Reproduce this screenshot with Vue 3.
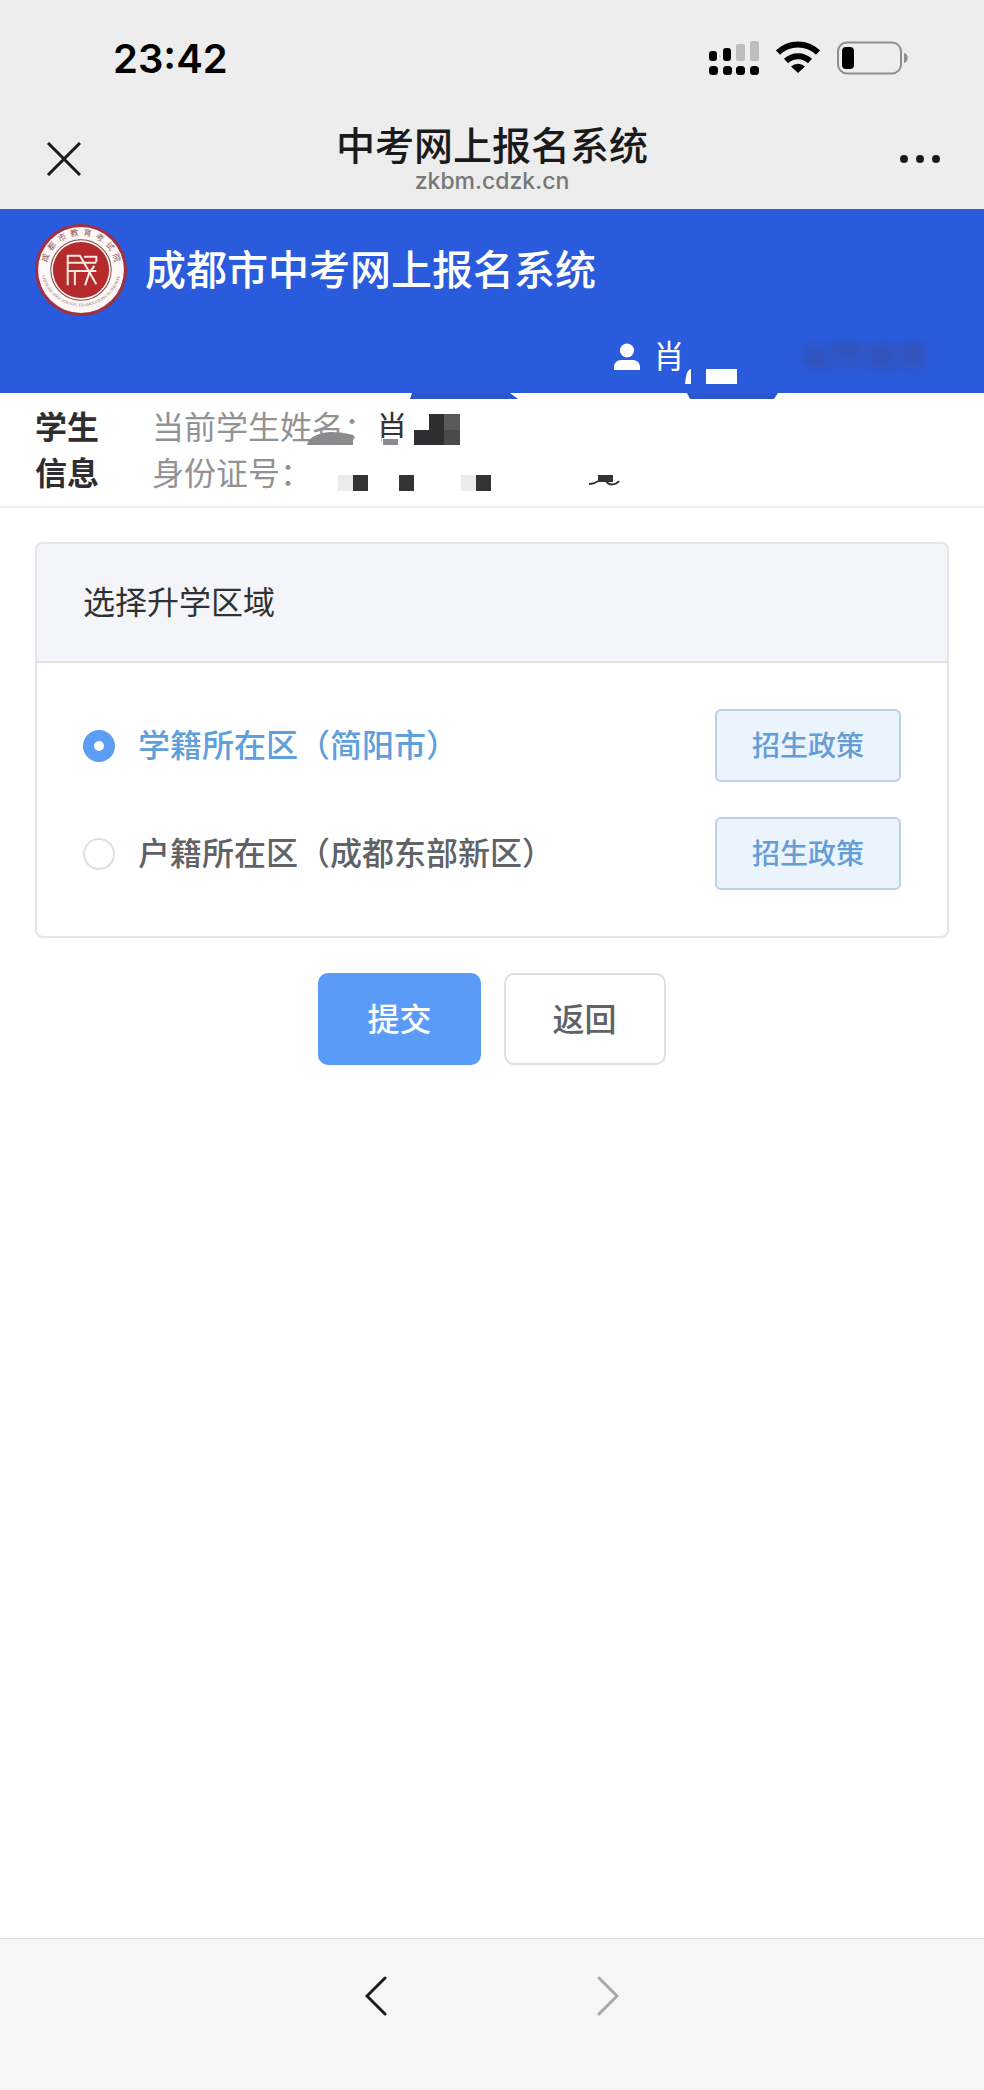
<template>
  <div class="page">
    <header class="chrome">
      <div class="status-bar">
        <time class="clock">23:42</time>
        <div class="status-icons">
          <svg width="50" height="34" viewBox="0 0 50 34" aria-hidden="true">
            <rect x="0" y="10" width="8" height="10" rx="3" />
            <rect x="14" y="7" width="8" height="13" rx="3" />
            <rect x="27" y="3" width="9" height="17" rx="2" fill="#bdbdbd" />
            <rect x="41" y="0" width="9" height="20" rx="2" fill="#bdbdbd" />
            <rect v-for="x in [0, 14, 27, 41]" :key="x" :x="x" y="25" width="9" height="9" rx="3.5" />
          </svg>
          <svg width="44" height="34" viewBox="0 0 44 34" aria-hidden="true">
            <g fill="none" stroke="#000" stroke-width="6">
              <path d="M2 11.500a29 29 0 0 1 40 0" />
              <path d="M10 20a17.500 17.500 0 0 1 24 0" />
            </g>
            <path d="M22 32l-7-6.600a10.500 10.500 0 0 1 14 0z" />
          </svg>
          <svg width="72" height="34" viewBox="0 0 72 34" aria-hidden="true">
            <rect x="1" y="1.500" width="63" height="31" rx="9" fill="none" stroke="#8e8e8e" stroke-width="2" />
            <rect x="5" y="6" width="12" height="22" rx="4" />
            <path d="M67 12c5 1 5 9 0 10z" fill="#8e8e8e" />
          </svg>
        </div>
      </div>
      <div class="title-bar">
        <button class="icon-btn" type="button" aria-label="关闭">
          <svg width="38" height="34" viewBox="-4 0 38 34" fill="none" stroke="#1a1a1a" stroke-width="3">
            <path d="M1 1l32 32M33 1L1 33" />
          </svg>
        </button>
        <div class="title-text">
          <div class="title-name">中考网上报名系统</div>
          <div class="title-host">zkbm.cdzk.cn</div>
        </div>
        <button class="icon-btn icon-btn-right" type="button" aria-label="更多">
          <svg width="42" height="10" viewBox="0 0 42 10" fill="#1a1a1a">
            <circle cx="5" cy="5" r="4" />
            <circle cx="21" cy="5" r="4" />
            <circle cx="37" cy="5" r="4" />
          </svg>
        </button>
      </div>
    </header>

    <div class="banner">
      <div class="brand">
        <svg class="logo" viewBox="0 0 90 90" aria-hidden="true">
          <defs>
            <path id="ring-top" d="M11 45a34 34 0 0 1 68 0" />
            <path id="ring-bottom" d="M5.500 41a39.500 39.500 0 1 0 79 0" />
          </defs>
          <circle cx="45" cy="45" r="45" fill="#a03045" />
          <circle cx="45" cy="45" r="42" fill="#fdf8f7" />
          <circle cx="45" cy="45" r="29.500" fill="none" stroke="#7c4a48" stroke-width="1" />
          <circle cx="45" cy="45" r="27.500" fill="#b52a2b" />
          <text class="ring-cn">
            <textPath href="#ring-top" startOffset="50%" text-anchor="middle">成&#8194;都&#8194;市&#8194;教&#8194;育&#8194;考&#8194;试&#8194;院</textPath>
          </text>
          <text class="ring-en">
            <textPath href="#ring-bottom" startOffset="50%" text-anchor="middle">CHENGDU EDUCATIONAL EXAMINATIONS AUTHORITY</textPath>
          </text>
          <g fill="none" stroke="#fbe9e2" stroke-width="2">
            <path d="M31 31h13l16 28" />
            <path d="M48 32h12v5M32 38h28" />
            <path d="M32 31v29M32 46h28M39 46v14" />
            <path d="M58 41l-5 7-4 12" />
          </g>
        </svg>
        <h1 class="brand-name">成都市中考网上报名系统</h1>
      </div>
      <div class="user">
        <svg class="user-icon" width="26" height="28" viewBox="0 0 26 28" fill="#fff" aria-hidden="true">
          <circle cx="13" cy="7.500" r="7" />
          <path d="M0 27v-3c0-4 3-7 7-7h12c4 0 7 3 7 7v3z" />
        </svg>
        <span class="user-name">肖</span>
        <svg class="user-cover" width="244" height="46" viewBox="0 0 244 46" aria-hidden="true">
          <defs>
            <filter id="smudge" x="-20%" y="-20%" width="140%" height="140%">
              <feGaussianBlur stdDeviation="4" />
            </filter>
          </defs>
          <path d="M0 45c1-9 2-14 6-15v15z" fill="#fff" />
          <rect x="21" y="30" width="31" height="15" fill="#fff" />
          <g fill="#3650a8" filter="url(#smudge)">
            <rect x="118" y="2" width="122" height="30" opacity="0.300" />
            <ellipse cx="130" cy="20" rx="14" ry="8" opacity="0.500" />
            <ellipse cx="162" cy="11" rx="14" ry="8" opacity="0.500" />
            <ellipse cx="197" cy="17" rx="12" ry="12" opacity="0.500" />
            <ellipse cx="229" cy="15" rx="11" ry="12" opacity="0.500" />
          </g>
        </svg>
      </div>
      <svg class="banner-edge" width="368" height="6" viewBox="0 0 368 6" fill="#2c55cc" aria-hidden="true">
        <path d="M2 0h98l8 6H0z" />
        <path d="M277 0h91l-4 6h-84z" />
      </svg>
    </div>

    <section class="student">
      <h2 class="student-title">学生信息</h2>
      <dl class="student-rows">
        <div class="student-row">
          <dt>当前学生姓名：
            <svg class="name-cover" width="46" height="13" viewBox="0 0 46 13" fill="#8b8b8d" aria-hidden="true">
              <path d="M0 13c1-7 10-12 23-13 9 0 16 1 23 3v10z" />
            </svg>
          </dt>
          <dd>肖
            <svg class="value-cover" width="78" height="31" viewBox="0 0 78 31" aria-hidden="true">
              <rect x="0" y="24" width="28" height="7" fill="#fff" />
              <rect x="1" y="25" width="15" height="6" fill="#8b8b8d" />
              <path d="M32 31V16h15V0h15v31z" fill="#2f2f31" />
              <rect x="62" y="0" width="16" height="16" fill="#5a5a5a" />
              <rect x="62" y="16" width="16" height="15" fill="#4a4a4a" />
            </svg>
          </dd>
        </div>
        <div class="student-row">
          <dt>身份证号：</dt>
          <dd>
            <svg class="id-cover" width="282" height="16" viewBox="0 0 282 16" fill="#333" aria-hidden="true">
              <path d="M0 0h15v16H0zM123 0h15v16h-15z" fill="#ebebeb" />
              <path d="M15 0h15v16H15zM61 0h15v16H61zM138 0h15v16h-15z" />
              <path d="M260 0h15v7h-15z" />
              <path d="M251 9c5 0 8-2 11-4M268 6c3 5 10 4 13 0" fill="none" stroke="#333" stroke-width="2" />
            </svg>
          </dd>
        </div>
      </dl>
    </section>

    <main class="content">
      <form @submit.prevent>
        <fieldset class="card" aria-labelledby="area-title">
          <div id="area-title" class="card-header">选择升学区域</div>
          <div class="card-body">
            <div v-for="item in areas" :key="item.value" class="option">
              <label class="option-label" :class="{ active: selected === item.value }">
                <input v-model="selected" type="radio" name="area" :value="item.value">
                <span>{{ item.label }}</span>
              </label>
              <button class="btn-policy" type="button">招生政策</button>
            </div>
          </div>
        </fieldset>
        <div class="actions">
          <button class="btn btn-primary" type="submit">提交</button>
          <button class="btn" type="button">返回</button>
        </div>
      </form>
    </main>

    <nav class="toolbar">
      <button class="icon-btn" type="button" aria-label="后退">
        <svg width="22" height="40" viewBox="0 0 22 40" fill="none" stroke="#1a1a1a" stroke-width="3" stroke-linecap="round">
          <path d="M20 2L2 20l18 18" />
        </svg>
      </button>
      <button class="icon-btn" type="button" aria-label="前进" disabled>
        <svg width="22" height="40" viewBox="0 0 22 40" fill="none" stroke="#a8a8a8" stroke-width="3" stroke-linecap="round">
          <path d="M2 2l18 18L2 38" />
        </svg>
      </button>
    </nav>
  </div>
</template>

<script setup>
import { ref } from 'vue';

const areas = [
  { value: 'school', label: '学籍所在区（简阳市）' },
  { value: 'household', label: '户籍所在区（成都东部新区）' }
];

const selected = ref('school');
</script>

<style>
body {
  margin: 0;
  background: #fff;
}
</style>

<style scoped>
.page {
  display: flex;
  flex-direction: column;
  min-height: 100vh;
  background: #fff;
  color: #333;
  font-family: "Noto Sans CJK SC", sans-serif;
  font-size: 32px;
}

button {
  font-family: inherit;
  cursor: pointer;
}

svg {
  display: block;
}

.chrome {
  background: #ededed;
}

.status-bar {
  display: flex;
  align-items: center;
  justify-content: space-between;
  height: 116px;
  padding: 0 75px 0 113px;
}

.clock {
  color: #000;
  font-family: Inter, sans-serif;
  font-size: 40px;
  font-weight: 600;
}

.status-icons {
  display: flex;
  align-items: center;
  gap: 17px;
}

.title-bar {
  display: grid;
  grid-template-columns: 1fr auto 1fr;
  align-items: center;
  height: 93px;
  padding: 0 43px 8px;
  box-sizing: border-box;
}

.icon-btn {
  padding: 0;
  border: 0;
  background: none;
  justify-self: start;
}

.icon-btn-right {
  justify-self: end;
}

.title-text {
  padding-bottom: 4px;
  text-align: center;
}

.title-name {
  color: #1a1a1a;
  font-size: 39px;
  font-weight: 500;
  line-height: 48px;
}

.title-host {
  color: #777;
  font-family: Inter, sans-serif;
  font-size: 23px;
  font-weight: 500;
  line-height: 28px;
}

.banner {
  position: relative;
  height: 184px;
  background: #2a5bdc;
  color: #fff;
}

.brand {
  display: flex;
  align-items: center;
  gap: 18px;
  padding: 15px 35px 0;
}

.logo {
  width: 92px;
  height: 92px;
}

.ring-cn {
  fill: #8c5a58;
  font-size: 8px;
}

.ring-en {
  fill: #8c6a68;
  font-family: "Liberation Serif", serif;
  font-size: 4px;
}

.brand-name {
  margin: 0;
  padding-bottom: 6px;
  font-size: 41px;
  font-weight: 500;
  line-height: 60px;
}

.user {
  display: flex;
  align-items: flex-start;
  justify-content: flex-end;
  margin-top: 7px;
  padding-right: 55px;
}

.user-icon {
  margin-top: 20px;
}

.user-name {
  margin-left: 13px;
  font-size: 32px;
  line-height: 62px;
}

.user-cover {
  margin-top: 16px;
}

.banner-edge {
  position: absolute;
  top: 100%;
  left: 410px;
}

.student {
  display: flex;
  gap: 53px;
  padding: 9px 35px 12px;
  border-bottom: 2px solid #eee;
}

.student-title {
  width: 64px;
  margin: 0;
  color: #2e2e30;
  font-size: 32px;
  font-weight: 700;
  line-height: 46px;
}

.student-rows {
  margin: 0;
}

.student-row {
  display: flex;
  line-height: 46px;
}

.student-row dt {
  position: relative;
  color: #929294;
}

.student-row dd {
  position: relative;
  margin: 0;
}

.name-cover {
  position: absolute;
  left: 155px;
  bottom: 3px;
}

.value-cover {
  position: absolute;
  left: 6px;
  bottom: 3px;
}

.id-cover {
  position: absolute;
  left: 26px;
  top: 27px;
}

.content {
  padding: 34px 35px;
}

.card {
  min-width: 0;
  margin: 0;
  padding: 0;
  border: 2px solid #e6e6ea;
  border-radius: 8px;
}

.card-header {
  padding: 32px 46px 37px;
  border-bottom: 2px solid #e2e3ea;
  border-radius: 6px 6px 0 0;
  background: #f4f5f9;
  color: #303133;
  line-height: 48px;
}

.card-body {
  display: flex;
  flex-direction: column;
  gap: 35px;
  padding: 46px;
}

.option {
  display: flex;
  align-items: center;
  justify-content: space-between;
}

.option-label {
  display: flex;
  align-items: center;
  gap: 23px;
  color: #606266;
  font-weight: 500;
  line-height: 48px;
  cursor: pointer;
}

.option-label span {
  padding-bottom: 5px;
}

.option-label.active {
  color: #5f9fdc;
}

.option-label input {
  width: 32px;
  height: 32px;
  margin: 0;
  border: 2px solid #dedfe2;
  border-radius: 50%;
  background: #fff;
  appearance: none;
}

.option-label input:checked {
  border: 11px solid #5b9cf5;
}

.btn-policy {
  height: 73px;
  padding: 0 35px 4px;
  border: 2px solid #bdd0e4;
  border-radius: 6px;
  background: #ebf3fd;
  color: #649dd6;
  font-size: 28px;
  font-weight: 500;
}

.actions {
  display: flex;
  justify-content: center;
  gap: 23px;
  margin-top: 35px;
}

.btn {
  height: 92px;
  padding: 0 47px 4px;
  border: 2px solid #dedfe4;
  border-radius: 10px;
  background: #fff;
  color: #606266;
  font-size: 32px;
  font-weight: 500;
}

.btn-primary {
  border-color: #5b9bf8;
  background: #5b9bf8;
  color: #fff;
}

.toolbar {
  display: flex;
  justify-content: center;
  gap: 210px;
  box-sizing: border-box;
  height: 152px;
  margin-top: auto;
  padding-bottom: 38px;
  border-top: 1px solid #dcdcdc;
  background: #f6f6f6;
}
</style>
